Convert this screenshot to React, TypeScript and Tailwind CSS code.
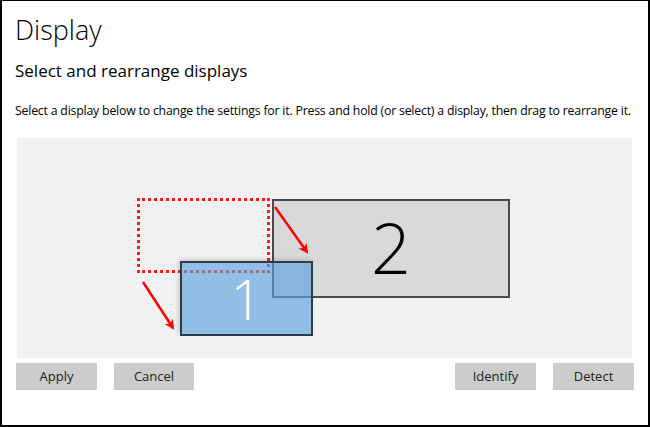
import React from "react";

export default function App() {
  const font = { fontFamily: '"Open Sans", "Noto Sans", "Liberation Sans", sans-serif' };
  return (
    <div
      className="w-[650px] h-[427px] bg-white border-black border-t border-l-2 border-r-2 border-b-2 relative overflow-hidden text-[#000]"
      style={font}
    >
      <div className="pl-[13px] pt-[11px]">
        <h1 className="text-[27px] leading-[36px] font-light text-black">Display</h1>
        <h2 className="mt-[12px] text-[17px] leading-[22px] text-black">Select and rearrange displays</h2>
        <p className="mt-[20px] text-[12.3px] leading-[18px] text-black tracking-[-0.2px] whitespace-nowrap">
          Select a display below to change the settings for it. Press and hold (or select) a display, then drag to rearrange it.
        </p>
      </div>
      <div className="ml-[15px] mt-[18px] w-[615px] h-[220px] bg-[#f2f2f2] relative">
        {/* dotted previous position */}
        <div className="absolute left-[120px] top-[60px] w-[133px] h-[75px] border-[3px] border-dotted border-[#ff1a1a]" />
        {/* monitor 2 */}
        <div className="absolute left-[255px] top-[61px] w-[238px] h-[99px] bg-[#d9d9d9] border-2 border-[#4a4a4a] flex items-center justify-center">
          <span className="text-[70px] font-light leading-none text-black mt-[-4px]">2</span>
        </div>
        {/* monitor 1 */}
        <div className="absolute left-[163px] top-[123px] w-[133px] h-[75px] bg-[#5ca2dc]/65 border-2 border-[#2e3b48] shadow-[-2px_-2px_4px_rgba(0,0,0,0.15)] flex items-center justify-center">
          <span className="text-[56px] font-light leading-none text-white mt-[-2px]">1</span>
        </div>
        {/* arrows */}
        <svg className="absolute left-0 top-0" width="615" height="220" viewBox="0 0 615 220">
          <defs>
            <marker id="ah" markerWidth="10" markerHeight="10" refX="8" refY="5" orient="auto" markerUnits="userSpaceOnUse">
              <path d="M0,0 L10,5 L0,10 L3,5 Z" fill="#ff0000" />
            </marker>
          </defs>
          <line x1="126" y1="144" x2="156" y2="190" stroke="#ff0000" strokeWidth="2.5" markerEnd="url(#ah)" />
          <line x1="258" y1="69" x2="290" y2="114" stroke="#ff0000" strokeWidth="2.5" markerEnd="url(#ah)" />
        </svg>
      </div>
      <div className="flex mt-[5px] pl-[14px] pr-[14px]">
        <div className="flex gap-[17px]">
          <button className="w-[81px] h-[27px] bg-[#cccccc] text-[13px] text-[#222]">Apply</button>
          <button className="w-[80px] h-[27px] bg-[#cccccc] text-[13px] text-[#222]">Cancel</button>
        </div>
        <div className="flex gap-[17px] ml-auto">
          <button className="w-[81px] h-[27px] bg-[#cccccc] text-[13px] text-[#222]">Identify</button>
          <button className="w-[81px] h-[27px] bg-[#cccccc] text-[13px] text-[#222]">Detect</button>
        </div>
      </div>
    </div>
  );
}
